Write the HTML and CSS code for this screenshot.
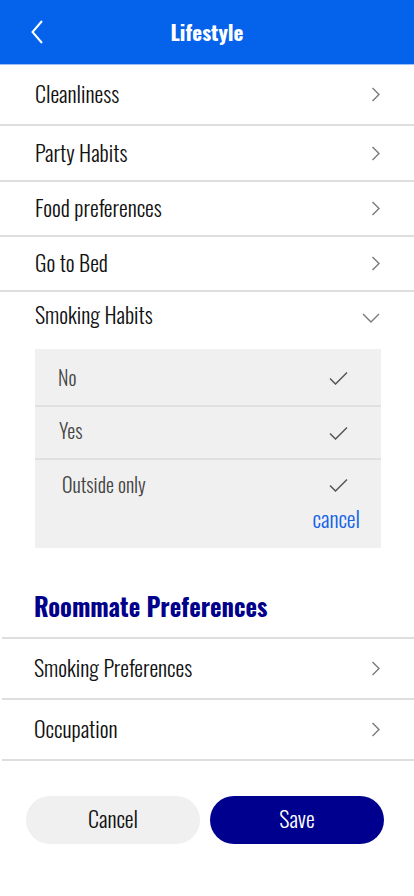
FILE: index.html
```html
<!DOCTYPE html>
<html lang="en">
<head>
<meta charset="utf-8">
<meta name="viewport" content="width=device-width, initial-scale=1">
<title>Lifestyle</title>
<link rel="stylesheet" href="styles.css">
</head>
<body>
<header class="topbar">
  <button class="back" aria-label="Back">
    <svg width="12" height="24" viewBox="0 0 12 24"><path d="M11 1 L1.5 12 L11 23" fill="none" stroke="#fff" stroke-width="2"/></svg>
  </button>
  <h1 class="title">Lifestyle</h1>
</header>

<main>
  <ul class="list">
    <li class="row row-first"><span class="label">Cleanliness</span><svg class="chev" width="10" height="15" viewBox="0 0 10 15"><path d="M1.5 1 L8 7.5 L1.5 14" fill="none" stroke="#7a7a7a" stroke-width="1.4"/></svg></li>
    <li class="row row-mid"><span class="label">Party Habits</span><svg class="chev" width="10" height="15" viewBox="0 0 10 15"><path d="M1.5 1 L8 7.5 L1.5 14" fill="none" stroke="#7a7a7a" stroke-width="1.4"/></svg></li>
    <li class="row row-mid"><span class="label">Food preferences</span><svg class="chev" width="10" height="15" viewBox="0 0 10 15"><path d="M1.5 1 L8 7.5 L1.5 14" fill="none" stroke="#7a7a7a" stroke-width="1.4"/></svg></li>
    <li class="row row-mid"><span class="label">Go to Bed</span><svg class="chev" width="10" height="15" viewBox="0 0 10 15"><path d="M1.5 1 L8 7.5 L1.5 14" fill="none" stroke="#7a7a7a" stroke-width="1.4"/></svg></li>
  </ul>

  <section class="expand">
    <div class="expand-head"><span class="label">Smoking Habits</span><svg class="chev-down" width="18" height="10" viewBox="0 0 18 10"><path d="M1 1 L9 9 L17 1" fill="none" stroke="#7a7a7a" stroke-width="1.4"/></svg></div>
    <div class="panel">
      <div class="opt opt-no"><span class="label">No</span><svg class="check" width="19" height="14" viewBox="0 0 19 14"><path d="M1 7.5 L6.5 13 L18 1.5" fill="none" stroke="#555" stroke-width="1.5"/></svg></div>
      <div class="opt opt-yes"><span class="label">Yes</span><svg class="check" width="19" height="14" viewBox="0 0 19 14"><path d="M1 7.5 L6.5 13 L18 1.5" fill="none" stroke="#555" stroke-width="1.5"/></svg></div>
      <div class="opt opt-last">
        <div class="opt-line"><span class="label">Outside only</span><svg class="check" width="19" height="14" viewBox="0 0 19 14"><path d="M1 7.5 L6.5 13 L18 1.5" fill="none" stroke="#555" stroke-width="1.5"/></svg></div>
        <a class="cancel-link" href="#">cancel</a>
      </div>
    </div>
  </section>

  <h2 class="section-title">Roommate Preferences</h2>
  <ul class="list list-lower">
    <li class="row row-lower"><span class="label">Smoking Preferences</span><svg class="chev" width="10" height="15" viewBox="0 0 10 15"><path d="M1.5 1 L8 7.5 L1.5 14" fill="none" stroke="#7a7a7a" stroke-width="1.4"/></svg></li>
    <li class="row row-lower"><span class="label">Occupation</span><svg class="chev" width="10" height="15" viewBox="0 0 10 15"><path d="M1.5 1 L8 7.5 L1.5 14" fill="none" stroke="#7a7a7a" stroke-width="1.4"/></svg></li>
  </ul>

  <div class="actions">
    <button class="btn btn-cancel">Cancel</button>
    <button class="btn btn-save">Save</button>
  </div>
</main>
</body>
</html>
```

FILE: styles.css
```css
* { box-sizing: border-box; }

html, body {
  margin: 0;
  padding: 0;
  background: #fff;
}

body {
  width: 414px;
  font-family: "Oswald", "Roboto Condensed", "Liberation Sans Narrow", "DejaVu Sans Condensed", sans-serif;
  font-weight: 300;
  color: #111;
}

.topbar {
  height: 65px;
  background: #0562ea;
  border-bottom: 1px solid #9cc0f4;
  display: flex;
  align-items: center;
  justify-content: center;
  position: relative;
}

.back {
  position: absolute;
  left: 31px;
  top: 20px;
  padding: 0;
  border: 0;
  background: none;
  display: flex;
}

.title {
  margin: 0;
  color: #fff;
  font-size: 21px;
  font-weight: 700;
  line-height: 1;
  padding-bottom: 1px;
}

.list {
  list-style: none;
  margin: 0;
  padding: 0;
}

.label {
  padding-bottom: 3px;
}

.row {
  display: flex;
  align-items: center;
  justify-content: space-between;
  padding: 0 33px 0 35px;
  border-bottom: 2px solid #dedede;
  font-size: 22px;
}

.row-first { height: 61px; }
.row-mid { height: 55px; }
.row-mid:nth-child(2) { height: 56px; }

.list-lower {
  border-top: 2px solid #dedede;
  margin-left: 2px;
}

.row-lower {
  height: 61px;
  padding-left: 32px;
}

.chev { display: block; }

.expand-head {
  height: 46px;
  display: flex;
  align-items: center;
  justify-content: space-between;
  padding: 0 34px 0 35px;
  font-size: 22px;
}

.chev-down {
  display: block;
  margin-top: 5px;
}

.panel {
  margin: 11px 33px 0 35px;
  background: #f0f0f0;
  color: #444;
  font-size: 20px;
}

.opt {
  display: flex;
  align-items: center;
  justify-content: space-between;
  padding: 0 33px 0 23px;
  border-bottom: 2px solid #e0e0e0;
}

.opt .label { padding-bottom: 2px; }

.opt-no { height: 58px; padding-top: 2px; }
.opt-yes { height: 53px; padding-left: 24px; }
.opt-yes .label { padding-bottom: 6px; }

.opt-last {
  border-bottom: 0;
  display: block;
  height: 88px;
  padding: 11px 21px 0 27px;
}

.opt-line {
  display: flex;
  align-items: center;
  justify-content: space-between;
  padding-right: 12px;
  height: 28px;
}

.check { display: block; }

.cancel-link {
  display: block;
  text-align: right;
  color: #1463e6;
  text-decoration: none;
  font-size: 22px;
  line-height: 26px;
  margin-top: 6px;
}

.section-title {
  margin: 0;
  padding: 44px 35px 17px 34px;
  color: #00008b;
  font-size: 24.5px;
  font-weight: 700;
  line-height: 28px;
}

.actions {
  display: flex;
  gap: 10px;
  padding: 35px 0 0 26px;
}

.btn {
  width: 174px;
  height: 48px;
  border: 0;
  border-radius: 24px;
  font-family: inherit;
  font-weight: 300;
  font-size: 22px;
  padding: 0 0 4px;
}

.btn-cancel {
  background: #f0f0f0;
  color: #111;
}

.btn-save {
  background: #00008f;
  color: #fff;
}
```
